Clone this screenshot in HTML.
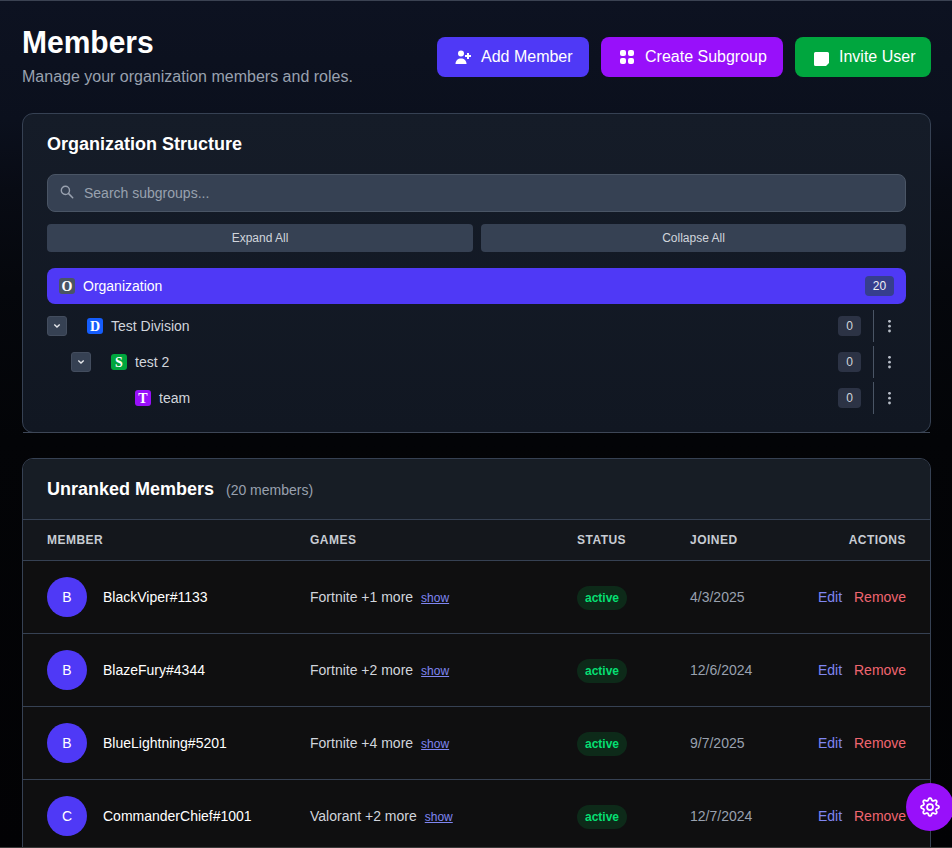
<!DOCTYPE html>
<html><head><meta charset="utf-8">
<style>
*{box-sizing:border-box;margin:0;padding:0}
html,body{width:952px;height:848px;overflow:hidden}
body{font-family:"Liberation Sans",sans-serif;color:#fff;position:relative;
background:linear-gradient(to bottom,#0d1221 0px,#0b101d 120px,#080b14 190px,#05070c 290px,#030407 440px,#020204 848px);}
.topline{position:absolute;left:0;top:0;width:952px;height:1px;background:#3b4252}
.botline{position:absolute;left:0;top:847px;width:952px;height:1px;background:#3a3a3a}
.abs{position:absolute}
h1{position:absolute;left:22px;top:24.5px;font-size:30px;font-weight:bold;line-height:36px;color:#fff;transform:scaleY(1.07);transform-origin:0 28.5px}
.sub{position:absolute;left:22px;top:66.8px;font-size:16px;line-height:20px;color:#99a1af}
.btn{position:absolute;top:37px;height:40px;border-radius:8px;display:flex;align-items:center;font-size:16px;color:#fff}
.btn svg{display:block}
.b1{left:437px;width:152px;background:#4f39f6}
.b2{left:601px;width:182px;background:#9810fa}
.b3{left:795px;width:136px;background:#00a63e}
.btn span{position:absolute;top:10px;line-height:20px}

.panel{position:absolute;left:22px;width:909px;border:1px solid #364153;border-radius:11px}
.p1{top:113px;height:320px;background:linear-gradient(to bottom,#151c28,#111722)}
.p1line{position:absolute;left:23px;top:432px;width:907px;height:1px;background:#3e4757}
.p1 .title{position:absolute;left:24px;top:19px;font-size:18px;font-weight:bold;line-height:22px}
.search{position:absolute;left:24px;top:60px;width:859px;height:38px;border:1px solid #4a5565;border-radius:8px;background:#364153}
.search span{position:absolute;left:36px;top:9px;font-size:14px;line-height:18px;color:#99a1af}
.sbtn{position:absolute;top:110px;height:28px;border-radius:4px;background:#364153;font-size:12px;line-height:28px;text-align:center;color:#d1d5dc}
.org{position:absolute;left:24px;top:154px;width:859px;height:36px;border-radius:8px;background:#4f39f6}
.badge{position:absolute;width:16px;height:16px;border-radius:3px;font-family:"Liberation Serif",serif;font-size:14px;font-weight:bold;line-height:17px;text-align:center;color:#fff}
.rowtxt{position:absolute;font-size:14px;line-height:18px;color:#d1d5dc}
.cnt{position:absolute;height:20px;border-radius:4px;font-size:12px;line-height:20px;text-align:center;color:#d1d5dc;background:#2c3345}
.chev{position:absolute;width:20px;height:20px;border-radius:3px;background:#364153;border:1px solid #434d5e}
.chev svg{position:absolute;left:-1px;top:-1px}
.vdiv{position:absolute;width:1px;height:32px;background:#4a5565}
.dots{position:absolute;width:4px}
.dots i{display:block;width:3px;height:3px;border-radius:1.5px;background:#b8bec8;margin-bottom:2px}

.p2{top:458px;height:420px;background:#0f0f10;overflow:hidden}
.p2 .hdr{position:absolute;left:0;top:0;width:907px;height:61px;background:#171d25;border-bottom:1px solid #364153}
.p2 .title{position:absolute;left:24px;top:19px;font-size:18px;font-weight:bold;line-height:22px}
.p2 .cntt{position:absolute;left:203px;top:21.5px;font-size:14px;line-height:18px;color:#99a1af}
.thead{position:absolute;left:0;top:61px;width:907px;height:41px;background:#14171c;border-bottom:1px solid #364153}
.th{position:absolute;top:13.2px;font-size:12px;font-weight:bold;line-height:14px;letter-spacing:0.48px;color:#c8ccd3}
.tr{position:absolute;left:0;width:907px;height:73px;border-bottom:1px solid #364153}
.av{position:absolute;left:24px;top:16px;width:40px;height:40px;border-radius:20px;background:#4f39f6;font-size:14px;line-height:40px;text-align:center;color:#fff}
.name{position:absolute;left:80px;top:27px;font-size:14px;line-height:18px;color:#fff}
.games{position:absolute;left:287px;top:27px;font-size:14px;line-height:18px;color:#d1d5dc}
.show{font-size:12px;color:#7f86f2;text-decoration:underline;margin-left:8px}
.act{position:absolute;left:554px;top:25px;width:50px;height:24px;border-radius:12px;background:#0d2a19;font-size:12px;font-weight:bold;line-height:24px;text-align:center;color:#05df72}
.join{position:absolute;left:667px;top:27px;font-size:14px;line-height:18px;color:#99a1af}
.edit{position:absolute;left:795px;top:27px;font-size:14px;line-height:18px;color:#7f86f2}
.rem{position:absolute;left:831px;top:27px;font-size:14px;line-height:18px;color:#ef6670}
.fab{position:absolute;left:906px;top:783px;width:48px;height:48px;border-radius:24px;background:#9810fa}
</style></head>
<body>
<div class="topline"></div>
<h1>Members</h1>
<div class="sub">Manage your organization members and roles.</div>

<div class="btn b1">
  <svg class="abs" style="left:18px;top:12px" width="16" height="16" viewBox="0 0 16 16"><circle cx="6" cy="4.5" r="3" fill="#fff"/><path d="M0.5 15c0-3.5 2.4-5.5 5.5-5.5s5.5 2 5.5 5.5z" fill="#fff"/><path d="M13 4v6M10 7h6" stroke="#fff" stroke-width="2"/></svg>
  <span style="left:44px">Add Member</span>
</div>
<div class="btn b2">
  <svg class="abs" style="left:18px;top:12px" width="16" height="16" viewBox="0 0 16 16"><rect x="1" y="1" width="6" height="6" rx="2" fill="#fff"/><rect x="9" y="1" width="6" height="6" rx="2" fill="#fff"/><rect x="1" y="9" width="6" height="6" rx="2" fill="#fff"/><rect x="9" y="9" width="6" height="6" rx="2" fill="#fff"/></svg>
  <span style="left:44px">Create Subgroup</span>
</div>
<div class="btn b3">
  <svg class="abs" style="left:19px;top:15px" width="16" height="16" viewBox="0 0 16 16"><path d="M1.5 0h12a1.5 1.5 0 0 1 1.5 1.5v9.5l-3 3H1.5A1.5 1.5 0 0 1 0 12.5v-11A1.5 1.5 0 0 1 1.5 0z" fill="#fff"/></svg>
  <span style="left:44px">Invite User</span>
</div>

<div class="panel p1">
  <div class="title">Organization Structure</div>
  <div class="search">
    <svg class="abs" style="left:12px;top:10px" width="14" height="14" viewBox="0 0 14 14"><circle cx="5.4" cy="5.4" r="4.1" stroke="#99a1af" stroke-width="1.4" fill="none"/><path d="M8.4 8.4l4.3 4.3" stroke="#99a1af" stroke-width="1.5" stroke-linecap="round"/></svg>
    <span>Search subgroups...</span>
  </div>
  <div class="sbtn" style="left:24px;width:426px">Expand All</div>
  <div class="sbtn" style="left:458px;width:425px">Collapse All</div>
  <div class="org">
    <div class="badge" style="left:12px;top:10px;background:#4a5565">O</div>
    <div class="rowtxt" style="left:36px;top:9px;color:#fff">Organization</div>
    <div class="cnt" style="left:818px;top:8px;width:29px;background:#363e8e;color:#eef0f3">20</div>
  </div>
  <!-- Test Division -->
  <div class="chev" style="left:24px;top:202px"><svg width="20" height="20" viewBox="0 0 20 20"><path d="M7.3 8.6L10 11.1l2.7-2.5" stroke="#e5e7eb" stroke-width="1.4" fill="none"/></svg></div>
  <div class="badge" style="left:64px;top:204px;background:#155dfc">D</div>
  <div class="rowtxt" style="left:88px;top:203px">Test Division</div>
  <div class="cnt" style="left:815px;top:202px;width:23px">0</div>
  <div class="vdiv" style="left:850px;top:196px"></div>
  <svg class="abs" style="left:865px;top:206px" width="3" height="13" viewBox="0 0 3 13"><circle cx="1.5" cy="1.3" r="1.4" fill="#b8bec8"/><circle cx="1.5" cy="6.15" r="1.4" fill="#b8bec8"/><circle cx="1.5" cy="11" r="1.4" fill="#b8bec8"/></svg>
  <!-- test 2 -->
  <div class="chev" style="left:48px;top:238px"><svg width="20" height="20" viewBox="0 0 20 20"><path d="M7.3 8.6L10 11.1l2.7-2.5" stroke="#e5e7eb" stroke-width="1.4" fill="none"/></svg></div>
  <div class="badge" style="left:88px;top:240px;background:#00a63e">S</div>
  <div class="rowtxt" style="left:112px;top:239px">test 2</div>
  <div class="cnt" style="left:815px;top:238px;width:23px">0</div>
  <div class="vdiv" style="left:850px;top:232px"></div>
  <svg class="abs" style="left:865px;top:242px" width="3" height="13" viewBox="0 0 3 13"><circle cx="1.5" cy="1.3" r="1.4" fill="#b8bec8"/><circle cx="1.5" cy="6.15" r="1.4" fill="#b8bec8"/><circle cx="1.5" cy="11" r="1.4" fill="#b8bec8"/></svg>
  <!-- team -->
  <div class="badge" style="left:112px;top:276px;background:#9810fa">T</div>
  <div class="rowtxt" style="left:136px;top:275px">team</div>
  <div class="cnt" style="left:815px;top:274px;width:23px">0</div>
  <div class="vdiv" style="left:850px;top:268px"></div>
  <svg class="abs" style="left:865px;top:278px" width="3" height="13" viewBox="0 0 3 13"><circle cx="1.5" cy="1.3" r="1.4" fill="#b8bec8"/><circle cx="1.5" cy="6.15" r="1.4" fill="#b8bec8"/><circle cx="1.5" cy="11" r="1.4" fill="#b8bec8"/></svg>
</div>

<div class="p1line"></div>
<div class="panel p2">
  <div class="hdr"><div class="title">Unranked Members</div><div class="cntt">(20 members)</div></div>
  <div class="thead">
    <div class="th" style="left:24px">MEMBER</div>
    <div class="th" style="left:287px">GAMES</div>
    <div class="th" style="left:554px">STATUS</div>
    <div class="th" style="left:667px">JOINED</div>
    <div class="th" style="right:24px">ACTIONS</div>
  </div>
  <div class="tr" style="top:102px">
    <div class="av">B</div><div class="name">BlackViper#1133</div>
    <div class="games">Fortnite +1 more<span class="show">show</span></div>
    <div class="act">active</div><div class="join">4/3/2025</div>
    <div class="edit">Edit</div><div class="rem">Remove</div>
  </div>
  <div class="tr" style="top:175px">
    <div class="av">B</div><div class="name">BlazeFury#4344</div>
    <div class="games">Fortnite +2 more<span class="show">show</span></div>
    <div class="act">active</div><div class="join">12/6/2024</div>
    <div class="edit">Edit</div><div class="rem">Remove</div>
  </div>
  <div class="tr" style="top:248px">
    <div class="av">B</div><div class="name">BlueLightning#5201</div>
    <div class="games">Fortnite +4 more<span class="show">show</span></div>
    <div class="act">active</div><div class="join">9/7/2025</div>
    <div class="edit">Edit</div><div class="rem">Remove</div>
  </div>
  <div class="tr" style="top:321px">
    <div class="av">C</div><div class="name">CommanderChief#1001</div>
    <div class="games">Valorant +2 more<span class="show">show</span></div>
    <div class="act">active</div><div class="join">12/7/2024</div>
    <div class="edit">Edit</div><div class="rem">Remove</div>
  </div>
</div>

<div class="fab">
  <svg class="abs" style="left:12px;top:12px" width="24" height="24" viewBox="0 0 24 24" fill="none" stroke="#fff" stroke-width="1.75" stroke-linejoin="round"><circle cx="12" cy="12" r="3"/><path d="M12.00 3.00 L12.35 3.05 L12.69 3.19 L13.01 3.43 L13.30 3.78 L13.52 4.35 L13.70 4.93 L13.89 5.29 L14.09 5.57 L14.30 5.77 L14.53 5.90 L14.78 5.97 L15.07 5.97 L15.41 5.92 L15.80 5.80 L16.33 5.51 L16.89 5.26 L17.34 5.22 L17.74 5.28 L18.08 5.42 L18.36 5.64 L18.58 5.92 L18.72 6.26 L18.78 6.66 L18.74 7.11 L18.49 7.67 L18.20 8.20 L18.08 8.59 L18.03 8.93 L18.03 9.22 L18.10 9.47 L18.23 9.70 L18.43 9.91 L18.71 10.11 L19.07 10.30 L19.65 10.48 L20.22 10.70 L20.57 10.99 L20.81 11.31 L20.95 11.65 L21.00 12.00 L20.95 12.35 L20.81 12.69 L20.57 13.01 L20.22 13.30 L19.65 13.52 L19.07 13.70 L18.71 13.89 L18.43 14.09 L18.23 14.30 L18.10 14.53 L18.03 14.78 L18.03 15.07 L18.08 15.41 L18.20 15.80 L18.49 16.33 L18.74 16.89 L18.78 17.34 L18.72 17.74 L18.58 18.08 L18.36 18.36 L18.08 18.58 L17.74 18.72 L17.34 18.78 L16.89 18.74 L16.33 18.49 L15.80 18.20 L15.41 18.08 L15.07 18.03 L14.78 18.03 L14.53 18.10 L14.30 18.23 L14.09 18.43 L13.89 18.71 L13.70 19.07 L13.52 19.65 L13.30 20.22 L13.01 20.57 L12.69 20.81 L12.35 20.95 L12.00 21.00 L11.65 20.95 L11.31 20.81 L10.99 20.57 L10.70 20.22 L10.48 19.65 L10.30 19.07 L10.11 18.71 L9.91 18.43 L9.70 18.23 L9.47 18.10 L9.22 18.03 L8.93 18.03 L8.59 18.08 L8.20 18.20 L7.67 18.49 L7.11 18.74 L6.66 18.78 L6.26 18.72 L5.92 18.58 L5.64 18.36 L5.42 18.08 L5.28 17.74 L5.22 17.34 L5.26 16.89 L5.51 16.33 L5.80 15.80 L5.92 15.41 L5.97 15.07 L5.97 14.78 L5.90 14.53 L5.77 14.30 L5.57 14.09 L5.29 13.89 L4.93 13.70 L4.35 13.52 L3.78 13.30 L3.43 13.01 L3.19 12.69 L3.05 12.35 L3.00 12.00 L3.05 11.65 L3.19 11.31 L3.43 10.99 L3.78 10.70 L4.35 10.48 L4.93 10.30 L5.29 10.11 L5.57 9.91 L5.77 9.70 L5.90 9.47 L5.97 9.22 L5.97 8.93 L5.92 8.59 L5.80 8.20 L5.51 7.67 L5.26 7.11 L5.22 6.66 L5.28 6.26 L5.42 5.92 L5.64 5.64 L5.92 5.42 L6.26 5.28 L6.66 5.22 L7.11 5.26 L7.67 5.51 L8.20 5.80 L8.59 5.92 L8.93 5.97 L9.22 5.97 L9.47 5.90 L9.70 5.77 L9.91 5.57 L10.11 5.29 L10.30 4.93 L10.48 4.35 L10.70 3.78 L10.99 3.43 L11.31 3.19 L11.65 3.05Z"/></svg>
</div>
<div class="botline"></div>
</body></html>
